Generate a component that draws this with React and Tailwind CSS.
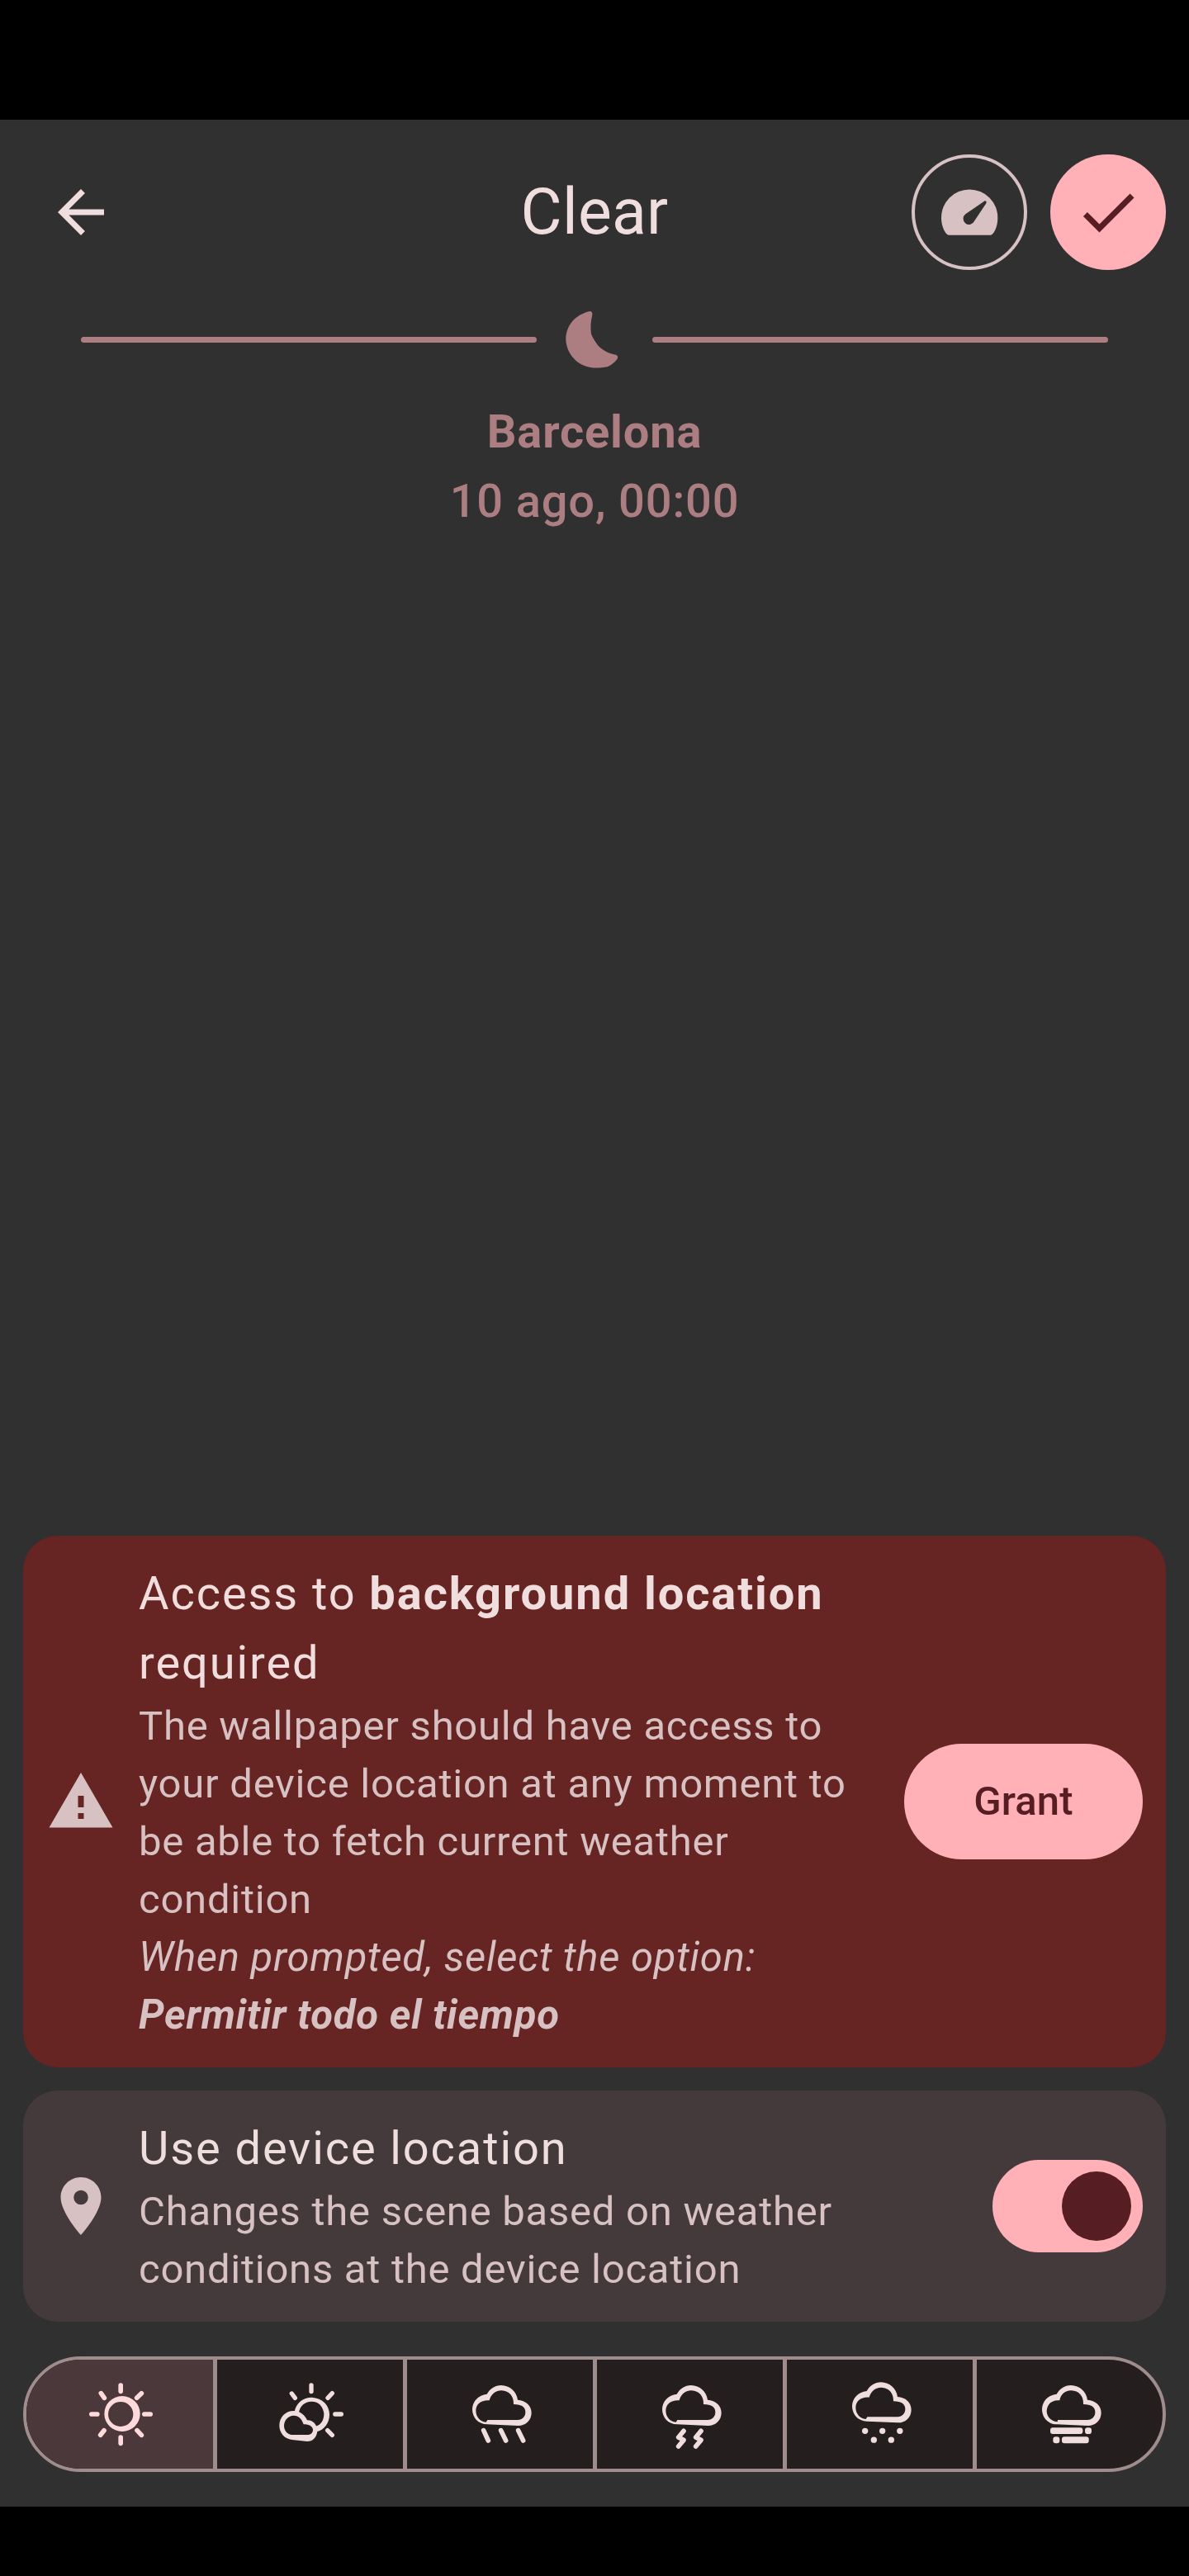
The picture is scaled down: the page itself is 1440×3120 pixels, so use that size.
const arrowBack = 'M20 11H7.83l5.59-5.59L12 4l-8 8 8 8 1.41-1.41L7.83 13H20v-2z';
const check = 'M9 16.17 4.83 12l-1.42 1.41L9 19 21 7l-1.41-1.41z';
const warning = 'M1 21h22L12 2 1 21zm12-3h-2v-2h2v2zm0-4h-2v-4h2v4z';
const pin =
  'M12 2C8.13 2 5 5.13 5 9c0 5.25 7 13 7 13s7-7.75 7-13c0-3.87-3.13-7-7-7zm0 9.5a2.5 2.5 0 1 1 0-5 2.5 2.5 0 0 1 0 5z';

function Icon({ d, className }) {
  return (
    <svg viewBox="0 0 24 24" className={`size-[84px] shrink-0 fill-current ${className || ''}`}>
      <path d={d} fillRule="evenodd" />
    </svg>
  );
}

function Gauge() {
  return (
    <svg viewBox="156 165 252 252" className="size-[84px] shrink-0">
      <path
        fill="#d7c1c2"
        d="M206 374C196 372 180 345 180 311A102.5 102.5 0 0 1 385 311C385 345 370 372 360 374Z"
      />
      <path fill="#303030" d="M336 251C341 247 346 252 343 259L300 323A21 21 0 1 1 268 298Z" />
    </svg>
  );
}

function Moon() {
  return (
    <svg viewBox="594 718.5 252 252" className="size-[84px] shrink-0 fill-current">
      <path d="M700 740C708 738 714 744 712 753C706 775 705 800 708 822C713 837 723 849 733 864C748 880 770 893 798 898C805 901 807 908 801 915C790 928 780 936 767 941C750 944 735 946 716 945C660 941 617 895 616 840C617 790 650 752 700 740Z" />
    </svg>
  );
}

function CloudShape({ thick, dy = 0 }) {
  return (
    <path
      transform={`translate(0 ${dy})`}
      fillRule="evenodd"
      d={
        'M330 289C298 289 276 264 276 234C277 205 298 182 329 179C340 160 358 147 381 147C413 148 437 170 441 200C470 202 491 220 491 247C491 275 470 294 443 294Z' +
        (thick
          ? 'M333 273H441C458 272 469 260 469 245C469 227 456 216 426 216C427 188 412 167 382 166C358 167 344 181 340 202C310 200 293 217 293 242C294 262 310 278 332 280Z'
          : 'M331 273H441C458 272 469 260 469 245C469 227 456 216 426 216C427 188 412 167 382 166C358 167 344 181 338 202C308 200 289 215 289 240C290 262 303 279 326 281Z')
      }
    />
  );
}

function Sunny() {
  return (
    <>
      <path
        fillRule="evenodd"
        d="M319 250.5A65 64.5 0 0 1 449 250.5A65 64.5 0 0 1 319 250.5ZM333 252A45.5 45 0 0 0 424 252A45.5 45 0 0 0 333 252Z"
      />
      <path
        className="fill-none stroke-current"
        strokeWidth="17"
        strokeLinecap="round"
        d="M378.500 147.500V169M378.500 336.500V358M272.500 252H293.500M464.500 252H486.500M307 176L319 193M454 176L437 193M318 311L305 328M438 311L454 328"
      />
    </>
  );
}

function PartlyCloudy() {
  return (
    <g transform="translate(-690 0)">
      <path d="M1010 243C1016 212 1040 191 1073 191C1112 193 1137 220 1137 253C1137 285 1118 310 1090 316L1086 296C1105 293 1117 276 1117 250C1114 224 1098 206 1072 206C1047 207 1029 222 1026 247Z" />
      <path
        fillRule="evenodd"
        d="M1001 345C973 341 955 320 955 293C955 263 977 240 1007 240C1031 241 1048 255 1056 274C1077 273 1093 290 1093 315C1090 337 1076 351 1056 351ZM1001 327H1057C1070 327 1077 318 1077 308C1075 297 1065 289 1043 289C1037 270 1026 257 1007 257C985 258 972 275 972 295C972 312 985 327 1001 327Z"
      />
      <path
        className="fill-none stroke-current"
        strokeWidth="16"
        strokeLinecap="round"
        d="M1071 147V169.500M1157.500 252H1180M1000 177L1012 193M1147 176L1131 193M1130 311L1147 328"
      />
    </g>
  );
}

function Rain() {
  return (
    <>
      <CloudShape />
      <path
        className="fill-none stroke-current"
        strokeWidth="17"
        strokeLinecap="round"
        d="M317 311L334 348M380 311L398 348M443 311L461 348"
      />
    </>
  );
}

function Storm() {
  return (
    <>
      <CloudShape />
      <path
        className="fill-none stroke-current"
        strokeWidth="17"
        strokeLinecap="round"
        strokeLinejoin="round"
        d="M354 313L335 336L354 346L335 369M417 313L398 336L417 346L398 369"
      />
    </>
  );
}

function Snow() {
  return (
    <>
      <CloudShape dy={-11} />
      <circle cx="323" cy="313" r="11" />
      <circle cx="386" cy="313" r="11" />
      <circle cx="449.500" cy="313" r="11" />
      <circle cx="355" cy="345.500" r="11" />
      <circle cx="418" cy="345.500" r="11" />
    </>
  );
}

function Fog() {
  return (
    <>
      <CloudShape thick />
      <rect x="306" y="301" width="118" height="23" rx="9" />
      <rect x="432" y="301" width="24" height="23" rx="10" />
      <rect x="316" y="334" width="24" height="24" rx="10" />
      <rect x="348" y="334" width="98" height="24" rx="9" />
    </>
  );
}

const others = [PartlyCloudy, Rain, Storm, Snow, Fog];

export default function App() {
  return (
    <div className="flex h-[3120px] w-[1440px] flex-col bg-[#303030] font-['Roboto',sans-serif] text-[#f0dede]">
      <div className="h-[145px] shrink-0 bg-black" />

      <header className="mt-[42px] grid h-[140px] shrink-0 grid-cols-[1fr_auto_1fr] items-center px-7">
        <Icon d={arrowBack} className="ml-7" />
        <h1 className="text-[77px] leading-[98px] tracking-[0.250px]">Clear</h1>
        <div className="flex justify-end gap-7">
          <button className="flex size-[140px] items-center justify-center rounded-full border-4 border-[#d7c1c2]">
            <Gauge />
          </button>
          <button className="flex size-[140px] items-center justify-center rounded-full bg-[#ffb1b7] text-[#561d22]">
            <Icon d={check} />
          </button>
        </div>
      </header>

      <section className="flex flex-1 flex-col px-[98px] pt-[42.500px] text-[#ad7e81]">
        <div className="flex items-center gap-7">
          <div className="h-[7px] flex-1 rounded-full bg-current" />
          <Moon />
          <div className="h-[7px] flex-1 rounded-full bg-current" />
        </div>
        <p className="mt-[27.500px] text-center text-[56px] leading-[84px] font-bold tracking-[0.840px]">Barcelona</p>
        <p className="text-center text-[56px] leading-[84px] font-medium tracking-[0.840px]">10 ago, 00:00</p>
      </section>

      <main className="flex shrink-0 flex-col gap-7 px-7">
        <div className="flex h-[644px] items-center rounded-[42px] bg-[#662422] px-7">
          <Icon d={warning} className="text-[#d7c1c2]" />
          <div className="ml-7 flex-1">
            <p className="text-[56px] leading-[84px] tracking-[1.920px]">
              Access to <b>background location</b>
              <br />
              required
            </p>
            <p className="text-[49px] leading-[70px] tracking-[0.750px] whitespace-nowrap text-[#d7c1c2]">
              The wallpaper should have access to
              <br />
              your device location at any moment to
              <br />
              be able to fetch current weather
              <br />
              condition
              <br />
              <i>When prompted, select the option:</i>
              <br />
              <b className="italic">Permitir todo el tiempo</b>
            </p>
          </div>
          <button className="h-[140px] w-[289px] rounded-full bg-[#ffb1b7] text-[49px] font-medium tracking-[0.100px] text-[#561d22]">
            Grant
          </button>
        </div>

        <div className="flex h-[280px] items-center rounded-[42px] bg-[#453a3b] px-7">
          <Icon d={pin} className="text-[#d7c1c2]" />
          <div className="ml-7 flex-1">
            <p className="text-[56px] leading-[84px] tracking-[1.900px]">Use device location</p>
            <p className="text-[49px] leading-[70px] tracking-[0.750px] text-[#d7c1c2]">
              Changes the scene based on weather
              <br />
              conditions at the device location
            </p>
          </div>
          <div className="flex h-[112px] w-[182px] items-center justify-end rounded-full bg-[#ffb1b7] p-3.5">
            <div className="size-[84px] rounded-full bg-[#561d22]" />
          </div>
        </div>
      </main>

      <nav className="mx-7 mt-[42px] mb-[42px] flex h-[140px] shrink-0 overflow-hidden rounded-full border-4 border-[#9f8c8c] bg-[#241e1e]">
        <div className="flex w-[226px] items-center justify-center bg-[#4a383a] text-[#ffdada]">
          <svg viewBox="246 126 258 252" className="h-[84px] w-[86px] fill-current">
            <Sunny />
          </svg>
        </div>
        {others.map((Glyph, i) => (
          <div key={i} className="flex w-[230px] items-center justify-center border-l-[5px] border-[#9f8c8c]">
            <svg viewBox="249 126 255 252" className="h-[84px] w-[85px] fill-current">
              <Glyph />
            </svg>
          </div>
        ))}
      </nav>

      <div className="h-[84px] shrink-0 bg-black" />
    </div>
  );
}
